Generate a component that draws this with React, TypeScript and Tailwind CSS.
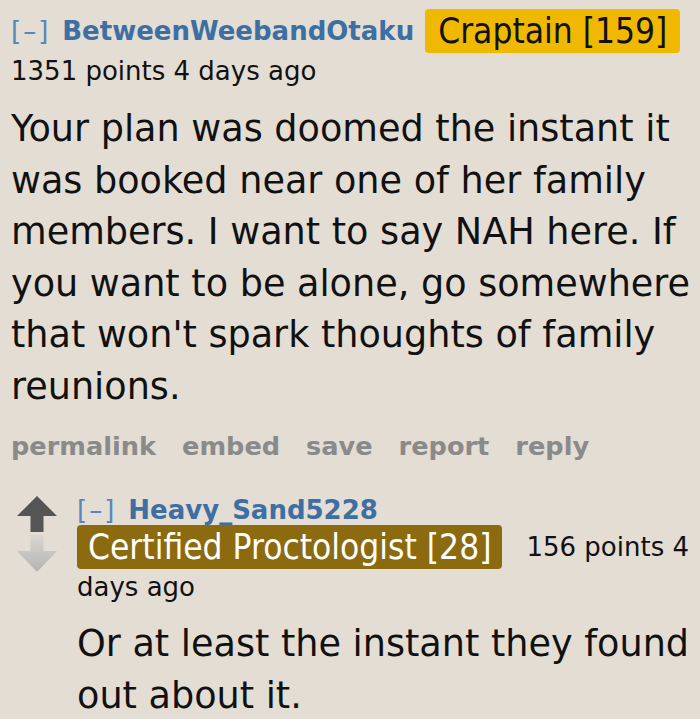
export default function App() {
  const font = { fontFamily: '"DejaVu Sans", Verdana, sans-serif' };
  return (
    <div className="min-h-[719px] w-[700px] overflow-hidden bg-[#e3ddd4] text-[#111]" style={font}>
      <div className="pl-[11px] pr-1 pt-[9px]">
        <div className="flex items-center">
          <span className="text-[26px] tracking-[2px] text-[#5a87b8]">[–]</span>
          <span className="ml-[12px] text-[26px] font-bold text-[#3d6fa3]">BetweenWeebandOtaku</span>
          <span className="ml-[11px] flex h-[44px] items-center rounded-[4px] bg-[#f0b800] px-[13px] font-['DejaVu_Sans_Condensed',sans-serif] text-[35px] leading-none">
            Craptain [159]
          </span>
        </div>
        <div className="mt-[1px] text-[26px] leading-[34px]">1351 points 4 days ago</div>
        <p className="mt-[15px] text-[36.6px] leading-[51.5px]">
          Your plan was doomed the instant it was booked near one of her family members. I want to say NAH here. If you want to be alone, go somewhere that won't spark thoughts of family reunions.
        </p>
        <div className="mt-[15px] flex gap-[26px] text-[25.6px] font-bold text-[#8a8a8a]">
          <span>permalink</span>
          <span>embed</span>
          <span>save</span>
          <span>report</span>
          <span>reply</span>
        </div>
        <div className="mt-[30px] flex">
          <div className="flex w-[52px] flex-col items-center pt-[1px]">
            <svg width="40" height="36" viewBox="0 0 40 36">
              <path d="M20 0 L40 20 L26.5 20 L26.5 36 L13.5 36 L13.5 20 L0 20 Z" fill="#555" />
            </svg>
            <svg width="40" height="37" viewBox="0 0 40 37" className="mt-[3px]">
              <defs>
                <linearGradient id="dg" x1="0" y1="0" x2="0" y2="1">
                  <stop offset="0" stopColor="#dad7d2" />
                  <stop offset="1" stopColor="#b5b3b0" />
                </linearGradient>
              </defs>
              <path d="M13.5 0 L26.5 0 L26.5 16 L40 16 L20 37 L0 16 L13.5 16 Z" fill="url(#dg)" />
            </svg>
          </div>
          <div className="ml-[14px] flex-1">
            <div className="flex items-center leading-[30px]">
              <span className="text-[26px] tracking-[2px] text-[#5a87b8]">[–]</span>
              <span className="ml-[12px] text-[26px] font-bold text-[#3d6fa3]">Heavy_Sand5228</span>
            </div>
            <div className="flex items-center">
              <span className="flex h-[44px] items-center rounded-[4px] bg-[#8c6a10] px-[11px] font-['DejaVu_Sans_Condensed',sans-serif] text-[35px] leading-none text-white">
                Certified Proctologist [28]
              </span>
              <span className="ml-[24px] text-[26px]">156 points 4</span>
            </div>
            <div className="mt-[1px] text-[26px] leading-[34px]">days ago</div>
            <p className="mt-[14px] text-[36.6px] leading-[51.5px]">
              Or at least the instant they found out about it.
            </p>
          </div>
        </div>
      </div>
    </div>
  );
}
